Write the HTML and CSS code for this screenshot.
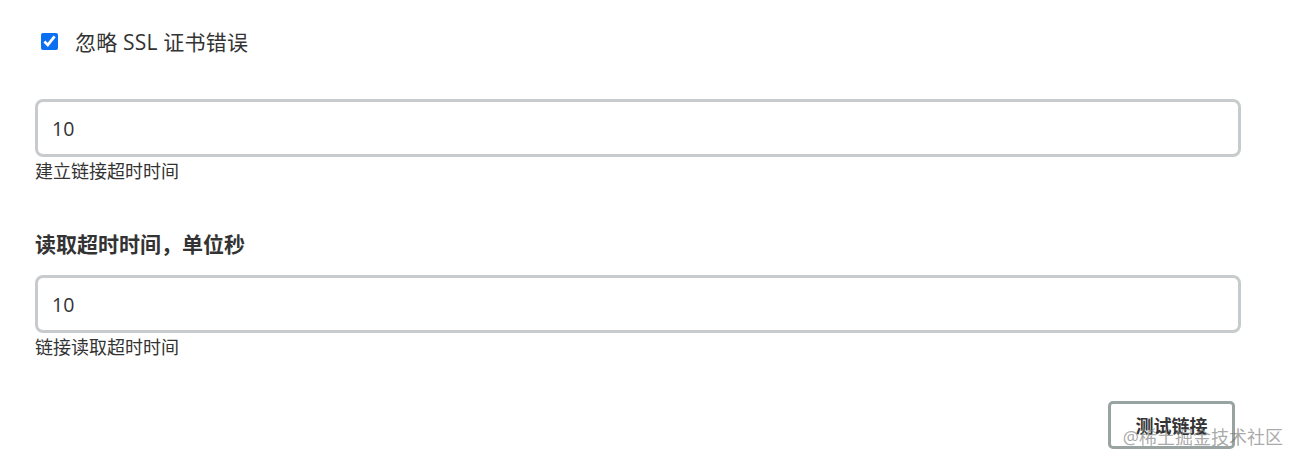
FILE: index.html
```
<!doctype html>
<html lang="zh-CN">
  <head>
    <meta charset="UTF-8" />
    <meta name="viewport" content="width=device-width, initial-scale=1.0" />
    <title>链接设置</title>
    <link rel="stylesheet" href="styles.css">
  </head>
  <body>
    <div class="settings-form">
      <label class="check-row">
        <input type="checkbox" class="check-box" checked />
        <span>忽略 SSL 证书错误</span>
      </label>

      <div class="field field-first">
        <input type="text" class="text-input" value="10" />
        <div class="field-help">建立链接超时时间</div>
      </div>

      <div class="field">
        <div class="field-label">读取超时时间，单位秒</div>
        <input type="text" class="text-input" value="10" />
        <div class="field-help">链接读取超时时间</div>
      </div>

      <div class="actions">
        <button class="test-btn">测试链接</button>
      </div>
    </div>

    <div class="watermark">@稀土掘金技术社区</div>
  </body>
</html>
```

FILE: styles.css
```
* {
  box-sizing: border-box;
  margin: 0;
  padding: 0;
  font-family: "Open Sans", "Noto Sans CJK SC", sans-serif;
}

body {
  background-color: #ffffff;
  color: #333333;
  width: 1297px;
  height: 465px;
  overflow: hidden;
  position: relative;
}

.settings-form {
  padding: 26px 56px 0 35px;
}

.check-row {
  display: flex;
  align-items: center;
  height: 30px;
  padding-left: 6px;
  font-size: 21px;
  color: #333;
}

.check-row span {
  letter-spacing: 0.2px;
}

.check-box {
  width: 17px;
  height: 17px;
  margin-right: 17px;
  accent-color: #0b6ff2;
}

.field-first {
  margin-top: 43px;
}

.field {
  margin-bottom: 44px;
}

.field-label {
  font-size: 21px;
  font-weight: 700;
  line-height: 30px;
  margin-bottom: 16px;
  color: #333;
}

.text-input {
  display: block;
  width: 100%;
  height: 58px;
  padding: 0 14px;
  border: 3px solid #c8cbcd;
  border-radius: 8px;
  font-size: 19.5px;
  color: #333;
  outline: none;
}

.field-help {
  font-size: 18px;
  line-height: 28px;
  color: #333;
}

.actions {
  display: flex;
  justify-content: flex-end;
  margin-top: -4px;
  padding-right: 6px;
}

.test-btn {
  width: 127px;
  height: 48px;
  background-color: #ffffff;
  border: 3px solid #98a3a2;
  border-radius: 5px;
  font-size: 18px;
  font-weight: 700;
  color: #333;
  cursor: pointer;
}

/* watermark from the screenshot source */
.watermark {
  position: absolute;
  right: 14px;
  bottom: 16px;
  font-size: 18px;
  color: rgba(120, 120, 120, 0.65);
  pointer-events: none;
}
```
